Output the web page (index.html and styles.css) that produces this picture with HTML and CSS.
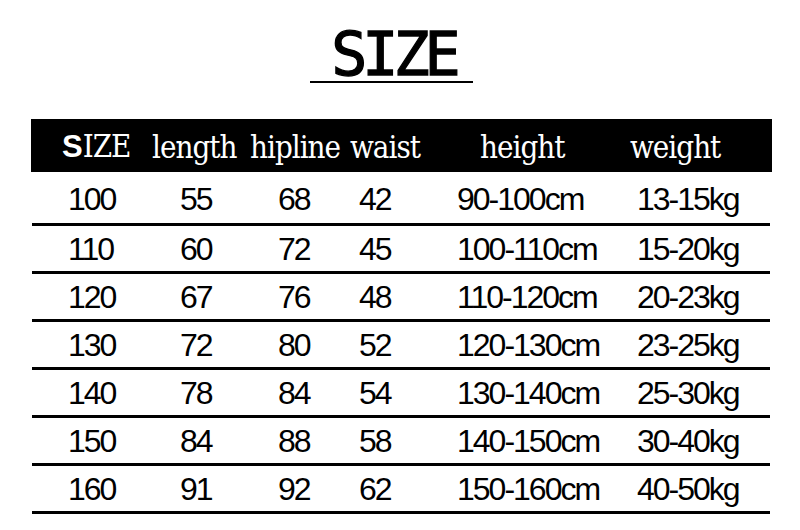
FILE: index.html
```html
<!DOCTYPE html>
<html>
<head>
<meta charset="utf-8">
<link rel="stylesheet" href="styles.css">
</head>
<body>
<div class="page">
  <div class="title-wrap"><h1 class="title">SIZE</h1></div>
  <div class="table">
    <div class="head">
      <span class="hc"><span class="s-big">S</span>IZE</span>
      <span class="hc">length</span>
      <span class="hc">hipline</span>
      <span class="hc">waist</span>
      <span class="hc">height</span>
      <span class="hc">weight</span>
    </div>
    <div class="row first"><span>100</span><span>55</span><span>68</span><span>42</span><span>90-100cm</span><span>13-15kg</span></div>
    <div class="row"><span>110</span><span>60</span><span>72</span><span>45</span><span>100-110cm</span><span>15-20kg</span></div>
    <div class="row"><span>120</span><span>67</span><span>76</span><span>48</span><span>110-120cm</span><span>20-23kg</span></div>
    <div class="row"><span>130</span><span>72</span><span>80</span><span>52</span><span>120-130cm</span><span>23-25kg</span></div>
    <div class="row"><span>140</span><span>78</span><span>84</span><span>54</span><span>130-140cm</span><span>25-30kg</span></div>
    <div class="row"><span>150</span><span>84</span><span>88</span><span>58</span><span>140-150cm</span><span>30-40kg</span></div>
    <div class="row"><span>160</span><span>91</span><span>92</span><span>62</span><span>150-160cm</span><span>40-50kg</span></div>
  </div>
</div>
</body>
</html>
```
FILE: styles.css
```css
html, body {
  margin: 0;
  padding: 0;
  background: #fff;
  color: #000;
}
.page {
  width: 800px;
  height: 530px;
  overflow: hidden;
}
.title-wrap {
  padding-top: 27px;
  display: flex;
  justify-content: center;
  padding-right: 17px;
}
.title {
  margin: 0;
  width: 163px;
  text-align: center;
  font-family: "DejaVu Sans Mono", monospace;
  font-weight: normal;
  -webkit-text-stroke: 1.3px #000;
  font-size: 60px;
  line-height: 54px;
  letter-spacing: -5px;
  border-bottom: 2px solid #000;
  text-indent: 4px;
}
.table {
  margin-top: 36px;
  margin-left: 32px;
  width: 740px;
}
.head {
  background: #000;
  color: #fff;
  height: 53px;
  margin-left: -1px;
  display: grid;
  grid-template-columns: 90px 98px 100px 130px 150px 1fr;
  padding-left: 31px;
  align-items: center;
  font-family: "DejaVu Serif", "Liberation Serif", serif;
  font-stretch: condensed;
  font-size: 31px;
  letter-spacing: -1px;
}
.hc {
  padding-top: 2px;
  white-space: nowrap;
}
.s-big {
  font-family: "Liberation Sans", sans-serif;
  font-weight: bold;
  font-stretch: normal;
  font-size: 31px;
  letter-spacing: 0;
}
.row {
  display: grid;
  grid-template-columns: 112px 98px 81px 98px 180px 1fr;
  padding-left: 36px;
  height: 43px;
  padding-top: 2px;
  box-sizing: content-box;
  align-items: center;
  border-bottom: 3px solid #000;
  margin-right: 2px;
  font-family: "Liberation Sans", Arial, sans-serif;
  font-size: 32px;
  letter-spacing: -2px;
  white-space: nowrap;
}
.row.first {
  height: 47px;
  padding-top: 4px;
}
```
